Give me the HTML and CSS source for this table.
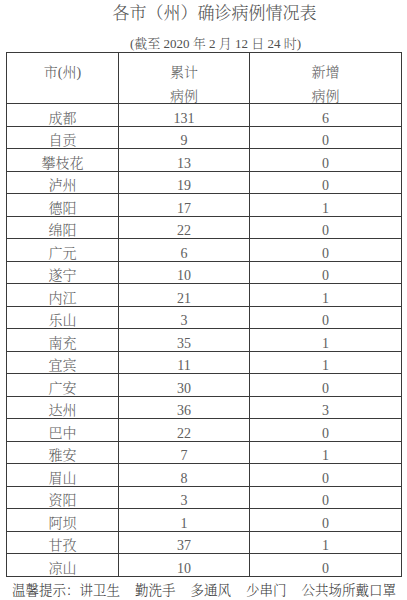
FILE: index.html
```html
<!DOCTYPE html>
<html lang="zh-CN">
<head>
<meta charset="utf-8">
<title>各市（州）确诊病例情况表</title>
<link rel="stylesheet" href="styles.css">
</head>
<body>
<div class="page">
  <h1 class="title">各市（州）确诊病例情况表</h1>
  <p class="subtitle">(截至 2020 年 2 月 12 日 24 时)</p>
  <table class="cases">
    <colgroup>
      <col class="c-city">
      <col class="c-total">
      <col class="c-new">
    </colgroup>
    <thead>
      <tr>
        <th><div class="hd">市(州)</div></th>
        <th><div class="hd">累计<br>病例</div></th>
        <th><div class="hd">新增<br>病例</div></th>
      </tr>
    </thead>
    <tbody>
      <tr><td>成都</td><td>131</td><td>6</td></tr>
      <tr><td>自贡</td><td>9</td><td>0</td></tr>
      <tr><td>攀枝花</td><td>13</td><td>0</td></tr>
      <tr><td>泸州</td><td>19</td><td>0</td></tr>
      <tr><td>德阳</td><td>17</td><td>1</td></tr>
      <tr><td>绵阳</td><td>22</td><td>0</td></tr>
      <tr><td>广元</td><td>6</td><td>0</td></tr>
      <tr><td>遂宁</td><td>10</td><td>0</td></tr>
      <tr><td>内江</td><td>21</td><td>1</td></tr>
      <tr><td>乐山</td><td>3</td><td>0</td></tr>
      <tr><td>南充</td><td>35</td><td>1</td></tr>
      <tr><td>宜宾</td><td>11</td><td>1</td></tr>
      <tr><td>广安</td><td>30</td><td>0</td></tr>
      <tr><td>达州</td><td>36</td><td>3</td></tr>
      <tr><td>巴中</td><td>22</td><td>0</td></tr>
      <tr><td>雅安</td><td>7</td><td>1</td></tr>
      <tr><td>眉山</td><td>8</td><td>0</td></tr>
      <tr><td>资阳</td><td>3</td><td>0</td></tr>
      <tr><td>阿坝</td><td>1</td><td>0</td></tr>
      <tr><td>甘孜</td><td>37</td><td>1</td></tr>
      <tr><td>凉山</td><td>10</td><td>0</td></tr>
    </tbody>
  </table>
  <div class="tips">
    <span>温馨提示：讲卫生</span>
    <span>勤洗手</span>
    <span>多通风</span>
    <span>少串门</span>
    <span>公共场所戴口罩</span>
  </div>
</div>
</body>
</html>
```
FILE: styles.css
```css
html, body {
  margin: 0;
  padding: 0;
  background: #ffffff;
}

body {
  font-family: "Liberation Serif", "Noto Serif CJK SC", "Noto Sans CJK SC", serif;
  font-weight: 300;
  color: #606060;
}

.page {
  width: 407px;
  height: 600px;
  overflow: hidden;
}

.title {
  margin: 0;
  padding: 4px 0 0 22px;
  font-size: 17px;
  line-height: 20px;
  font-weight: 300;
  text-align: center;
  color: #505050;
}

.subtitle {
  margin: 12px 0 0;
  padding-left: 24px;
  font-size: 13px;
  line-height: 16px;
  text-align: center;
  color: #505050;
}

.cases {
  margin-left: 6px;
  width: 395px;
  border-collapse: collapse;
  table-layout: fixed;
}

.c-city { width: 112px; }
.c-total { width: 131px; }
.c-new { width: 152px; }

.cases th,
.cases td {
  border: 1px solid #3a3a3a;
  padding: 0;
  text-align: center;
  font-weight: 300;
  font-size: 14px;
}

.cases th {
  height: 50px;
  vertical-align: top;
}

.hd {
  padding-top: 8px;
  line-height: 24px;
  margin-bottom: -6px;
}

.cases td {
  height: 21.5px;
  line-height: 14px;
  vertical-align: bottom;
}

.tips {
  display: flex;
  gap: 15px;
  margin-top: 5px;
  padding-left: 12px;
  font-size: 13.5px;
  line-height: 18px;
  color: #3a3a3a;
  white-space: nowrap;
}
```
